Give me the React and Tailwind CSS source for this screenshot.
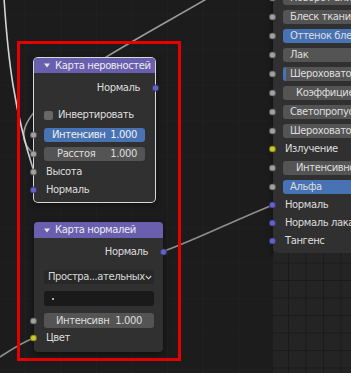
import React from 'react';

// socket colours used by Blender node sockets
const SOCKET = {
  gray: 'bg-[#a1a1a1]',
  purple: 'bg-[#6363c7]',
  yellow: 'bg-[#c7c729]',
};

const Socket = ({ color = 'gray', right = false }) => (
  <span
    className={`absolute top-1/2 -translate-y-1/2 w-[7px] h-[7px] rounded-full border border-black/40 ${SOCKET[color]} ${
      right ? 'right-[-4px]' : 'left-[-4px]'
    }`}
  />
);

const FieldSocket = () => (
  <span className="absolute left-[-14px] top-1/2 -translate-y-1/2 w-[7px] h-[7px] rounded-full border border-black/40 bg-[#a1a1a1]" />
);

const Chevron = () => (
  <svg width="7" height="5" viewBox="0 0 7 5" className="shrink-0">
    <path d="M0.8 1 L3.5 3.8 L6.2 1" fill="none" stroke="#d6d6d6" strokeWidth="1.1" />
  </svg>
);

const Header = ({ title, className }) => (
  <div className={`flex items-center gap-[5px] pl-[10px] rounded-t-[4px] bg-[#6a5fae] text-[#ececec] whitespace-nowrap ${className}`}>
    <svg width="6" height="5" viewBox="0 0 6 5" className="shrink-0">
      <path d="M0 0.5 L6 0.5 L3 4.5 Z" fill="#e6e6e6" />
    </svg>
    <span className="leading-none">{title}</span>
  </div>
);

const OutputRow = ({ label }) => (
  <div className="relative h-[18px] flex items-center justify-end pr-[15px]">
    <span>{label}</span>
    <Socket color="purple" right />
  </div>
);

const InputRow = ({ label, color }) => (
  <div className="relative h-[18px] flex items-center pl-[12px]">
    <span>{label}</span>
    <Socket color={color} />
  </div>
);

// right-hand Principled BSDF rows
const rightRows = [
  { label: 'Поворот анизотропии', kind: 'field' },
  { label: 'Блеск ткани', kind: 'field' },
  { label: 'Оттенок блеска', kind: 'blue' },
  { label: 'Лак', kind: 'field' },
  { label: 'Шероховатость лака', kind: 'sliver' },
  { label: 'Коэффициент преломления', kind: 'field', indent: true },
  { label: 'Светопропускаемость', kind: 'field' },
  { label: 'Шероховатость пропускания', kind: 'field' },
  { label: 'Излучение', kind: 'label', color: 'yellow' },
  { label: 'Интенсивность излучения', kind: 'field', indent: true },
  { label: 'Альфа', kind: 'blue' },
  { label: 'Нормаль', kind: 'label', color: 'purple' },
  { label: 'Нормаль лака', kind: 'label', color: 'purple' },
  { label: 'Тангенс', kind: 'label', color: 'purple' },
];

const RightRow = ({ row }) => {
  if (row.kind === 'label') {
    return (
      <div className="relative h-[18px] flex items-center pl-[12px] whitespace-nowrap">
        <span>{row.label}</span>
        <Socket color={row.color} />
      </div>
    );
  }
  const bg = row.kind === 'blue' ? 'bg-[#4772b3]' : 'bg-[#545454]';
  return (
    <div className="relative h-[19px] flex items-center pl-[10px]">
      <div className={`relative flex-1 h-[14px] rounded-l-[3px] flex items-center whitespace-nowrap ${bg} ${row.indent ? 'pl-[13px]' : 'pl-[7px]'}`}>
        {row.kind === 'sliver' && <span className="absolute left-0 top-0 bottom-0 w-[3px] rounded-l-[3px] bg-[#4772b3]" />}
        <span className="relative">{row.label}</span>
      </div>
      <Socket color="gray" />
    </div>
  );
};

const App = () => {
  return (
    <div className="relative w-[351px] h-[373px] overflow-hidden flex bg-[#1c1c1c] text-[10px] tracking-[-0.4px] text-[#dedede] font-['DejaVu_Sans',sans-serif] leading-none">
      {/* Links */}
      <svg className="absolute inset-0" width="351" height="373" viewBox="0 0 351 373">
        <path d="M215 -6 C 120 50, -15 115, 34 154" fill="none" stroke="#9a9a9a" strokeWidth="1.6" />
        <path d="M4 -2 C 8 60, 14 110, 34 172" fill="none" stroke="#d4d4d4" strokeWidth="1.6" />
        <path d="M162 252 C 200 238, 235 220, 273 205" fill="none" stroke="#8e8e8e" strokeWidth="1.6" />
        <path d="M-8 362 C 8 352, 20 343, 34 338" fill="none" stroke="#8e8e8e" strokeWidth="1.6" />
      </svg>

      {/* Left canvas */}
      <div className="w-[273px] shrink-0 pl-[17px] pt-[41px] bg-[linear-gradient(to_right,#202020_1px,transparent_1px),linear-gradient(to_bottom,#1f1f1f_1px,transparent_1px)] bg-[size:35.5px_35.5px] bg-[position:25px_14px]">
        <div className="relative z-10 w-[164px] h-[320px] border-[3px] border-[#e60000] pl-[14px] pt-[14px]">
          {/* Bump node */}
          <div className="w-[121px] rounded-[4px] bg-[#303030] ring-1 ring-[#d8d8d8] shadow-[0_2px_6px_rgba(0,0,0,0.5)]">
            <Header title="Карта неровностей" className="h-[15px]" />
            <div className="pt-[6px] pb-[3px]">
              <OutputRow label="Нормаль" />
              <div className="mt-[9px] h-[18px] flex items-center gap-[5px] pl-[10px]">
                <span className="w-[9px] h-[9px] rounded-[2px] bg-[#676767]" />
                <span>Инвертировать</span>
              </div>
              <div className="relative mt-[4px] h-[14px] mx-[10px] rounded-[3px] bg-[#4772b3] flex items-center justify-between pl-[8px] pr-[8px] text-[#f0f0f0]">
                <span>Интенсивн</span>
                <span>1.000</span>
                <FieldSocket />
              </div>
              <div className="relative mt-[5px] h-[14px] mx-[10px] rounded-[3px] bg-[#545454] flex items-center justify-between pl-[13px] pr-[8px]">
                <span>Расстоя</span>
                <span>1.000</span>
                <FieldSocket />
              </div>
              <div className="mt-[2px]">
                <InputRow label="Высота" color="gray" />
                <InputRow label="Нормаль" color="purple" />
              </div>
            </div>
          </div>

          {/* Normal map node */}
          <div className="mt-[20px] w-[129px] rounded-[4px] bg-[#303030] shadow-[0_2px_6px_rgba(0,0,0,0.5)]">
            <Header title="Карта нормалей" className="h-[16px]" />
            <div className="pt-[5px] pb-[5px]">
              <OutputRow label="Нормаль" />
              <div className="mt-[9px] h-[14px] ml-[10px] mr-[9px] rounded-[3px] bg-[#282828] flex items-center justify-between pl-[4px] pr-[4px] text-[#d8d8d8] whitespace-nowrap">
                <span>Простра...ательных</span>
                <Chevron />
              </div>
              <div className="mt-[7px] h-[15px] ml-[10px] mr-[9px] rounded-[3px] bg-[#1a1a1a] flex items-center pl-[8px]">
                <span className="w-[2px] h-[2px] rounded-full bg-[#e0e0e0]" />
              </div>
              <div className="relative mt-[7px] h-[15px] ml-[10px] mr-[9px] rounded-[3px] bg-[#545454] flex items-center justify-center gap-[6px]">
                <span>Интенсивн</span>
                <span>1.000</span>
                <FieldSocket />
              </div>
              <div className="mt-[1px]">
                <InputRow label="Цвет" color="yellow" />
              </div>
            </div>
          </div>
        </div>
      </div>

      {/* Right column: Principled BSDF node and grid below */}
      <div className="relative z-10 flex-1 flex flex-col">
        <div className="-mt-[12px] pb-[3px] rounded-bl-[4px] bg-[#303030] shadow-[0_2px_6px_rgba(0,0,0,0.5)]">
          {rightRows.map((row, i) => (
            <RightRow key={i} row={row} />
          ))}
        </div>
        <div className="flex-1 bg-[#242424] bg-[linear-gradient(to_right,#1b1b1b_1px,transparent_1px),linear-gradient(to_bottom,#1b1b1b_1px,transparent_1px)] bg-[size:17.5px_17.5px] bg-[position:15px_9.5px]" />
      </div>
    </div>
  );
};

export default App;
